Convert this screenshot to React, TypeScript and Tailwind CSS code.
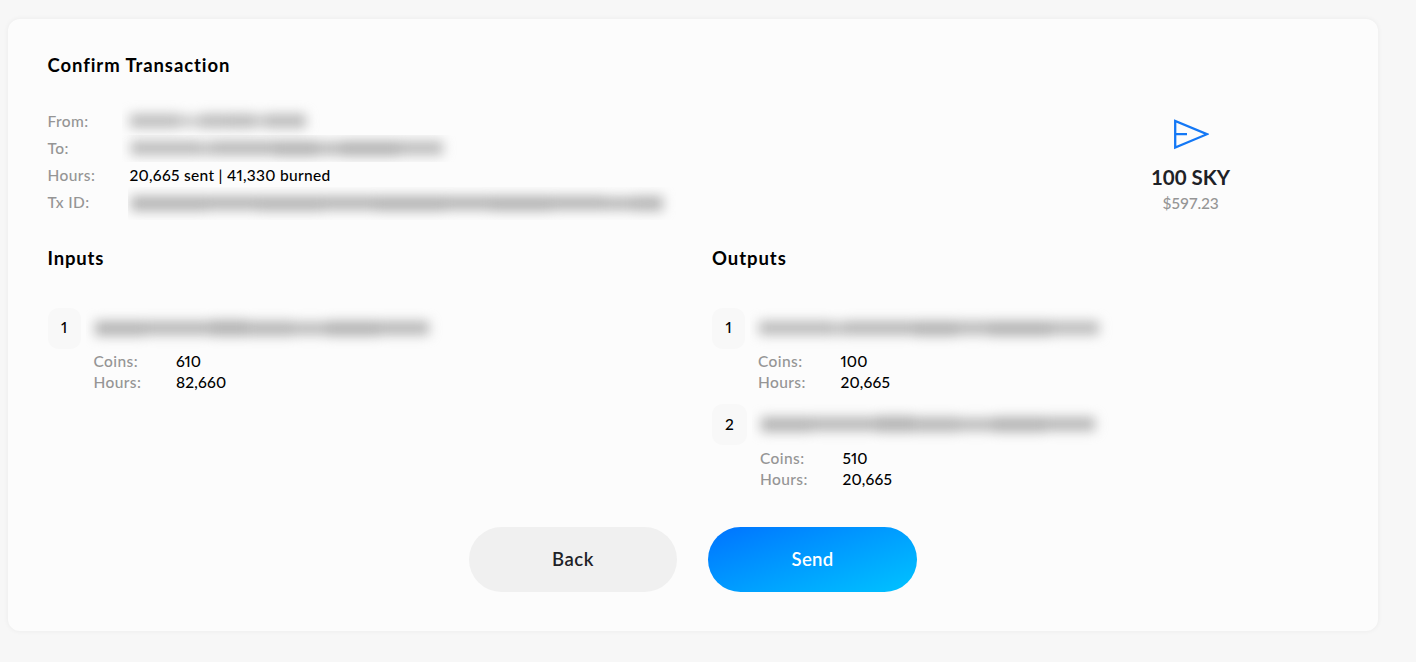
import type { ReactNode } from "react";

const label = "text-[15.5px] font-medium tracking-[0.4px] text-[#959595]";
const value = "text-[15.5px] font-medium text-black proportional-nums";

type Segment = { width: number; height: number; opacity: number };

const s = (width: number, height: number, opacity: number): Segment => ({ width, height, opacity });

const NAME = [s(48, 14, 0.85), s(10, 12, 0.7), s(12, 11, 0.65), s(28, 14, 0.85), s(26, 14, 0.88), s(12, 12, 0.7), s(40, 14, 0.88)];
const ADDRESS_A = [s(68, 14, 0.88), s(14, 13, 0.8), s(62, 14, 0.92), s(42, 15, 1), s(24, 13, 0.88), s(58, 15, 1), s(44, 14, 0.85)];
const ADDRESS_A_LONG = [s(72, 14, 0.88), s(14, 13, 0.8), s(70, 14, 0.92), s(42, 15, 1), s(32, 14, 0.88), s(62, 15, 1), s(48, 14, 0.85)];
const ADDRESS_B = [s(50, 15, 0.97), s(66, 14, 0.92), s(36, 16, 1), s(46, 15, 0.92), s(34, 13, 0.88), s(52, 15, 1), s(50, 14, 0.92)];
const HASH = [s(76, 15, 0.97), s(50, 14, 0.95), s(66, 15, 0.97), s(52, 14, 0.95), s(70, 15, 1), s(46, 14, 0.96), s(60, 15, 1), s(54, 14, 0.96), s(28, 13, 0.92), s(30, 15, 0.95)];

function Redacted({ segments, className }: { segments: Segment[]; className: string }) {
  return (
    <div aria-hidden="true" className={`flex overflow-hidden ${className}`}>
      <div className="flex items-center blur-[6px]">
        {segments.map((seg, i) => (
          <span key={i} className="block bg-[#b2b2b2]" style={{ width: seg.width, height: seg.height, opacity: seg.opacity }} />
        ))}
      </div>
    </div>
  );
}

function Row({ name, children }: { name: string; children: ReactNode }) {
  return (
    <div className="flex h-[27.3px] items-center">
      <div className={`w-[82px] shrink-0 ${label}`}>{name}</div>
      {children}
    </div>
  );
}

type EntryProps = { index: number; address: Segment[]; coins: string; hours: string; wide?: boolean };

function Entry({ index, address, coins, hours, wide }: EntryProps) {
  return (
    <div className="flex h-[96.4px]">
      <div className={`flex h-[41px] shrink-0 items-center justify-center rounded-[11px] bg-[#f8f8f8] ${wide ? "w-[35px]" : "w-[33px]"} ${value}`}>
        {index}
      </div>
      <div className="ml-[5px]">
        <Redacted segments={address} className="h-[41px] pr-4 pl-[9px]" />
        <div className="ml-[8px] flex h-[21px] items-center pt-[6px]">
          <span className={`w-[82.5px] ${label}`}>Coins:</span>
          <span className={`${value} tracking-[0.1px]`}>{coins}</span>
        </div>
        <div className="ml-[8px] flex h-[21px] items-center pt-[6px]">
          <span className={`w-[82.5px] ${label}`}>Hours:</span>
          <span className={`${value} tracking-[0.2px]`}>{hours}</span>
        </div>
      </div>
    </div>
  );
}

const heading = "text-[18.5px] leading-6 font-bold text-black";

export default function App() {
  return (
    <div className="h-[662px] w-full overflow-hidden bg-[#f7f7f7] pt-[19px] pl-2 font-['Lato',sans-serif]">
      <main className="flex h-[612px] w-[1370px] flex-col rounded-xl bg-[#fcfcfc] pt-[34px] pl-[39.5px] shadow-[0_0_4px_1px_rgba(0,0,0,0.04)]">
        <h1 className={`${heading} tracking-[0.91px]`}>Confirm Transaction</h1>

        <section className="mt-[30.5px] flex h-[110px]">
          <div className="w-[1043px]">
            <Row name="From:">
              <Redacted segments={NAME} className="-my-2 -ml-2 h-[42px] pr-4 pl-2" />
            </Row>
            <Row name="To:">
              <Redacted segments={ADDRESS_A} className="-ml-2 h-full pr-4 pl-[9px]" />
            </Row>
            <Row name="Hours:">
              <span className={`${value} tracking-[0.3px]`}>20,665 sent | 41,330 burned</span>
            </Row>
            <Row name="Tx ID:">
              <Redacted segments={HASH} className="-ml-[2px] h-[33px] pr-4 pl-[3px]" />
            </Row>
          </div>
          <div className="flex w-[200px] flex-col items-center pt-[11px]">
            <svg width="36" height="31" viewBox="0 0 36 31" fill="none" stroke="#1478f5" strokeWidth="2.3">
              <path d="M2.2 2V28.5L34 15.2Z M2 15.2H14" />
            </svg>
            <div className="mt-[15px] text-[20.5px] leading-6 font-bold text-[#1e2227]">100 SKY</div>
            <div className="mt-[4px] text-[15.5px] leading-5 font-medium tracking-[-0.25px] text-[#959595]">$597.23</div>
          </div>
        </section>

        <section className="mt-[28.5px] flex h-[261px]">
          <div className="w-[664.5px]">
            <h2 className={`${heading} tracking-[0.85px]`}>Inputs</h2>
            <div className="mt-[37.5px]">
              <Entry index={1} address={ADDRESS_B} coins="610" hours="82,660" />
            </div>
          </div>
          <div>
            <h2 className={`${heading} tracking-[0.95px]`}>Outputs</h2>
            <div className="mt-[37.5px]">
              <Entry index={1} address={ADDRESS_A_LONG} coins="100" hours="20,665" />
              <Entry index={2} address={ADDRESS_B} coins="510" hours="20,665" wide />
            </div>
          </div>
        </section>

        <footer className="mt-[19.5px] ml-[421.5px] flex gap-[31px]">
          <button className="h-[65px] w-[208px] rounded-full bg-[#f0f0f0] pt-px text-[18.5px] font-semibold tracking-[0.5px] text-[#1e2227]">Back</button>
          <button className="h-[65px] w-[209px] rounded-full bg-linear-160 from-[#0072ff] to-[#00c3ff] pt-px text-[18.5px] font-semibold tracking-[0.3px] text-white">Send</button>
        </footer>
      </main>
    </div>
  );
}
